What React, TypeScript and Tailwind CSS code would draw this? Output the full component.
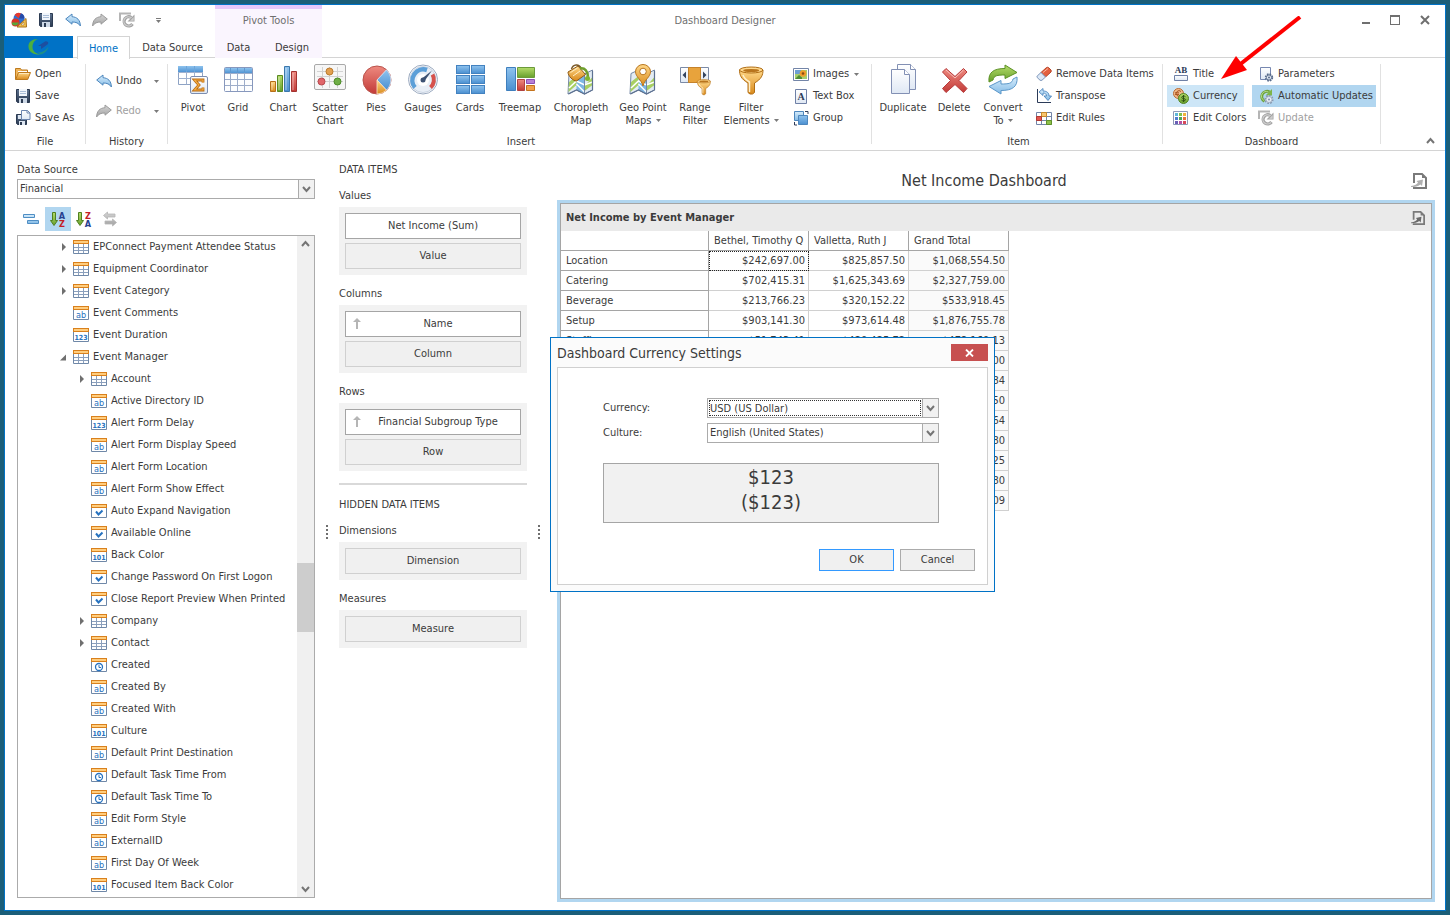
import { useState, type ReactNode } from 'react';
import clsx from 'clsx';

type FieldKind = 'table' | 'ab' | '123' | '101' | 'check' | 'clock';

interface Field {
  label: string;
  kind: FieldKind;
  level: number;
  state?: 'open' | 'closed';
}

const FIELDS: Field[] = [
  { label: 'EPConnect Payment Attendee Status', kind: 'table', level: 1, state: 'closed' },
  { label: 'Equipment Coordinator', kind: 'table', level: 1, state: 'closed' },
  { label: 'Event Category', kind: 'table', level: 1, state: 'closed' },
  { label: 'Event Comments', kind: 'ab', level: 1 },
  { label: 'Event Duration', kind: '123', level: 1 },
  { label: 'Event Manager', kind: 'table', level: 1, state: 'open' },
  { label: 'Account', kind: 'table', level: 2, state: 'closed' },
  { label: 'Active Directory ID', kind: 'ab', level: 2 },
  { label: 'Alert Form Delay', kind: '123', level: 2 },
  { label: 'Alert Form Display Speed', kind: 'ab', level: 2 },
  { label: 'Alert Form Location', kind: 'ab', level: 2 },
  { label: 'Alert Form Show Effect', kind: 'ab', level: 2 },
  { label: 'Auto Expand Navigation', kind: 'check', level: 2 },
  { label: 'Available Online', kind: 'check', level: 2 },
  { label: 'Back Color', kind: '101', level: 2 },
  { label: 'Change Password On First Logon', kind: 'check', level: 2 },
  { label: 'Close Report Preview When Printed', kind: 'check', level: 2 },
  { label: 'Company', kind: 'table', level: 2, state: 'closed' },
  { label: 'Contact', kind: 'table', level: 2, state: 'closed' },
  { label: 'Created', kind: 'clock', level: 2 },
  { label: 'Created By', kind: 'ab', level: 2 },
  { label: 'Created With', kind: 'ab', level: 2 },
  { label: 'Culture', kind: '101', level: 2 },
  { label: 'Default Print Destination', kind: 'ab', level: 2 },
  { label: 'Default Task Time From', kind: 'clock', level: 2 },
  { label: 'Default Task Time To', kind: 'clock', level: 2 },
  { label: 'Edit Form Style', kind: 'ab', level: 2 },
  { label: 'ExternalID', kind: 'ab', level: 2 },
  { label: 'First Day Of Week', kind: 'ab', level: 2 },
  { label: 'Focused Item Back Color', kind: '101', level: 2 },
];

const PIVOT_ROWS = [
  ['Location', '$242,697.00', '$825,857.50', '$1,068,554.50'],
  ['Catering', '$702,415.31', '$1,625,343.69', '$2,327,759.00'],
  ['Beverage', '$213,766.23', '$320,152.22', '$533,918.45'],
  ['Setup', '$903,141.30', '$973,614.48', '$1,876,755.78'],
  ['Staffing', '$51,743.41', '$420,425.72', '$472,169.13'],
  ['', '', '', '$98,250.00'],
  ['', '', '', '$41,306.84'],
  ['', '', '', '$12,482.50'],
  ['', '', '', '$76,190.64'],
  ['', '', '', '$30,415.80'],
  ['', '', '', '$22,764.25'],
  ['', '', '', '$18,093.80'],
  ['', '', '', '$6,578,665.09'],
];

/* ---------- icons ---------- */

function Svg({ size, children }: { size: number; children: ReactNode }) {
  return (
    <svg width={size} height={size} viewBox={`0 0 ${size} ${size}`} fill="none" className="shrink-0" aria-hidden="true">
      {children}
    </svg>
  );
}

function Gradients() {
  const stops: [string, string, string][] = [
    ['gBlue', '#8fc3ee', '#4a8fd0'],
    ['gSky', '#d6ecfb', '#84bbe6'],
    ['gOrange', '#ffd889', '#d98a1c'],
    ['gGreen', '#b5dc6a', '#679f2c'],
    ['gRed', '#ee8a80', '#c23a37'],
    ['gPaper', '#ffffff', '#dfe8f4'],
    ['gSteel', '#5a6f8c', '#2c3b52'],
    ['gGrey', '#d5d5d5', '#a2a2a2'],
  ];
  return (
    <svg width="0" height="0" className="absolute" aria-hidden="true">
      <defs>
        {stops.map(([id, from, to]) => (
          <linearGradient key={id} id={id} x1="0" y1="0" x2="0" y2="1">
            <stop offset="0" stopColor={from} />
            <stop offset="1" stopColor={to} />
          </linearGradient>
        ))}
      </defs>
    </svg>
  );
}

const Floppy = () => (
  <>
    <path d="M1.500 1.500h13v13h-12l-1-1z" fill="url(#gSteel)" stroke="#2c3b52" />
    <path d="M4 1h8v7H4z" fill="#f2f6fb" />
    <path d="M5 3.500h6M5 5.500h6" stroke="#a9bdd6" />
    <path d="M4 10h8v5H4z" fill="#cdd8e6" />
    <path d="M6 11h2v4H6z" fill="#2c3b52" />
  </>
);

const UndoShape = ({ grey }: { grey?: boolean }) => (
  <path
    d="M.7 7 7 2v2.700c5 .3 8.300 3.300 8.400 9.300C13.500 11 11 10 7 10v2.200z"
    fill={grey ? 'url(#gGrey)' : 'url(#gSky)'}
    stroke={grey ? '#9b9b9b' : '#4c86bd'}
    strokeLinejoin="round"
  />
);

const UndoIcon = () => <Svg size={16}><UndoShape /></Svg>;
const RedoIcon = () => <Svg size={16}><g transform="translate(16 0) scale(-1 1)"><UndoShape grey /></g></Svg>;

const SaveIcon = () => <Svg size={16}><Floppy /></Svg>;

const SaveAsIcon = () => (
  <Svg size={16}>
    <path d="M1.500 4.500h10v10h-9l-1-1z" fill="url(#gSteel)" stroke="#2c3b52" />
    <path d="M3 5h4v4H3zM4 11h6v4H4z" fill="#dde6f1" />
    <path d="M5 12h2v3H5z" fill="#2c3b52" />
    <path d="M6.500.500h6l2.500 2.500v6.500H6.500z" fill="url(#gPaper)" stroke="#6d86b0" />
    <path d="M12 .500V3h3" stroke="#6d86b0" />
  </Svg>
);

const OpenIcon = () => (
  <Svg size={16}>
    <path d="M.500 13.500v-11h5l1 1.500h6v3" fill="#f0b65c" stroke="#bd7a1e" />
    <path d="M3 5.500h9" stroke="#fff" />
    <path d="M.700 13.500 3.500 6.500h12l-2.800 7z" fill="url(#gOrange)" stroke="#bd7a1e" strokeLinejoin="round" />
    <path d="M4 7.500h10" stroke="#ffe9b8" />
  </Svg>
);

const AppIcon = () => (
  <Svg size={16}>
    <circle cx="8" cy="6.500" r="5.500" fill="#2f6fd0" />
    <path d="M8 6.500 3.500 3A5.500 5.500 0 0 1 10 1.300z" fill="#e33a2e" />
    <path d="M8 6.500 10 1.300A5.500 5.500 0 0 1 13.500 6.500z" fill="#2549a8" />
    <circle cx="4.500" cy="10.500" r="4" fill="#d93426" />
    <path d="M1 10.500h7a4 4 0 0 1-7 1.500z" fill="#57a639" />
    <path d="m15 6.500.500 8.500H6z" fill="#f5c24e" stroke="#a7701b" strokeLinejoin="round" />
    <path d="m12.800 10 .200 3h-3z" fill="#fff" stroke="#a7701b" strokeWidth=".6" />
  </Svg>
);

const RefreshGreyIcon = () => (
  <Svg size={16}>
    <path d="M1 9V1.500h11" stroke="#b5b5b5" strokeWidth="2" />
    <path d="M13.500 12A4.600 4.600 0 1 1 12.300 5.500" stroke="#a3a3a3" strokeWidth="3.200" />
    <path d="M15.500 2.500v7H8.500z" fill="#a3a3a3" />
    <path d="M13 12.300A4.600 4.600 0 1 1 12 5.500" stroke="#cfcfcf" strokeWidth="1.200" />
    <path d="M14.700 5v3.700h-3.700z" fill="#cfcfcf" />
  </Svg>
);

const UpdatesIcon = () => (
  <Svg size={16}>
    <path d="M6.500 13.300A5.200 5.200 0 1 1 11.500 4" stroke="#6da33a" strokeWidth="3" />
    <path d="M14 1v6.500H7.500z" fill="#7fb548" />
    <path d="M6 12.500A4.700 4.700 0 0 1 10.500 4" stroke="#b4da8a" />
    <circle cx="11" cy="11.500" r="3.800" fill="#e9eef5" stroke="#8798b0" strokeDasharray="1.800 1.100" strokeWidth="1.600" />
    <circle cx="11" cy="11.500" r="3" fill="#e9eef5" stroke="#8798b0" strokeWidth=".7" />
    <circle cx="11" cy="11.500" r="1.100" fill="#8798b0" />
  </Svg>
);

const PivotIcon = () => (
  <Svg size={32}>
    <path d="M1.500 2.500h24v18h-24z" fill="#fff" stroke="#8da2c4" />
    <path d="M1 2h25v6.500H1z" fill="url(#gBlue)" />
    <path d="M1 8.500h25M1 14.500h25M9.500 8v12.500M17.500 8v12.500" stroke="#9fb1cf" />
    <path d="M9.500 2v6M17.500 2v6" stroke="#6ca5da" />
    <rect x="13.500" y="12.500" width="17" height="17" rx="1.500" fill="url(#gPaper)" stroke="#7c8db0" />
    <path d="M26 18.500v-2.500h-8.500l4.500 5-4.500 5H26v-2.500" stroke="#b8690e" strokeWidth="2.800" />
    <path d="M26 18.500v-2.500h-8.500l4.500 5-4.500 5H26v-2.500" stroke="#f4ac45" strokeWidth="1.200" />
  </Svg>
);

const GridIcon = () => (
  <Svg size={32}>
    <rect x="2.500" y="3.500" width="28" height="24" rx="1" fill="#fdfeff" stroke="#8798bd" />
    <path d="M3 4h27v5.500H3z" fill="url(#gBlue)" />
    <path d="M3 9.500h27M3 15.500h27M3 21.500h27M8.500 9v18M15.500 9v18M22.500 9v18" stroke="#9dadca" />
    <path d="M8.500 4v5M15.500 4v5M22.500 4v5" stroke="#5f98cf" />
  </Svg>
);

const ChartIcon = () => (
  <Svg size={32}>
    <path d="M3.500 17.500h5v10h-5z" fill="url(#gOrange)" stroke="#b56f1a" />
    <path d="M10.500 11.500h5v16h-5z" fill="url(#gGreen)" stroke="#5a8a22" />
    <path d="M17.500 2.500h5v25h-5z" fill="url(#gBlue)" stroke="#3c78ac" />
    <path d="M24.500 7.500h5v20h-5z" fill="url(#gRed)" stroke="#a33330" />
    <path d="M5 19v7M12 13v13M19 4v22M26 9v17" stroke="#fff" strokeOpacity=".5" />
  </Svg>
);

const ScatterIcon = () => (
  <Svg size={32}>
    <rect x=".500" y=".500" width="31" height="25" rx="1.500" fill="#f6f6f6" stroke="#a9a9a9" />
    <path d="M8.500 3v21M15.500 3v21M23.500 3v21M3 7.500h26M3 12.500h26M3 17.500h26" stroke="#d2d2d2" />
    <circle cx="15.500" cy="7.500" r="3.500" fill="#e2a050" stroke="#bb7a2c" />
    <circle cx="7.500" cy="17.500" r="3.500" fill="#e0666a" stroke="#b8474c" />
    <circle cx="23.500" cy="17.500" r="3.500" fill="#6fae46" stroke="#4b8a26" />
  </Svg>
);

const PiesIcon = () => (
  <Svg size={32}>
    <circle cx="17" cy="16" r="14" fill="url(#gRed)" stroke="#b9534c" />
    <path d="M17 16 26.500 5.800A14 14 0 0 1 26.500 26.200z" fill="url(#gBlue)" stroke="#dfeefa" strokeWidth=".8" />
    <path d="M17 16 26.500 26.200A14 14 0 0 1 17 30z" fill="url(#gOrange)" stroke="#fbe9cb" strokeWidth=".8" />
  </Svg>
);

const GaugesIcon = () => (
  <Svg size={32}>
    <circle cx="16" cy="15.500" r="14.500" fill="#fff" stroke="#9aa9bf" />
    <circle cx="16" cy="15.500" r="13" fill="#e9eff7" stroke="#c9d4e3" />
    <path d="M8 23.500A11 11 0 0 1 20 6" stroke="#5c9fd8" strokeWidth="4.500" />
    <path d="M25.500 10.500A10.500 10.500 0 0 1 23.500 23.500" stroke="#d6524c" strokeWidth="4" />
    <circle cx="16" cy="16" r="6" fill="#fff" />
    <path d="m15 14.500 10-8-7.500 10.500z" fill="#3d5273" />
    <circle cx="16" cy="16" r="2.500" fill="#3d5273" />
  </Svg>
);

const CardsIcon = () => (
  <Svg size={32}>
    {[1, 11, 21].map(y => (
      <g key={y}>
        <rect x="2.500" y={y + 0.5} width="13" height="8" fill="url(#gBlue)" stroke="#4382c0" />
        <rect x="17.500" y={y + 0.5} width="13" height="8" fill="url(#gBlue)" stroke="#4382c0" />
      </g>
    ))}
  </Svg>
);

const TreemapIcon = () => (
  <Svg size={32}>
    <path d="M2.500 3.500h9v23h-9z" fill="url(#gBlue)" stroke="#3f7fbd" />
    <path d="M13.500 3.500h17v10h-17z" fill="url(#gGreen)" stroke="#6b9a3a" />
    <path d="M13.500 15.500h7v11h-7z" fill="url(#gRed)" stroke="#b24340" />
    <path d="M22.500 15.500h8v4h-8z" fill="#b67fd6" stroke="#8b4fb4" />
    <path d="M22.500 21.500h8v5h-8z" fill="#f0a04a" stroke="#c4731d" />
  </Svg>
);

const FoldedMap = () => (
  <>
    <path d="M4 9.500 11.500 6l8 4L27.500 6v20l-8 4-8-4L3 30z" fill="#e3ecf4" stroke="#7488a6" strokeLinejoin="round" />
    <path d="M11.500 6.500 19.500 10v19.500l-8-3.500z" fill="#7db7e4" />
    <path d="M4 18l7.500-6v9L3.500 28zM19.500 22l8-9v8l-8 6z" fill="#a8cf62" />
    <path d="m11.500 20 8 8M4 24l7.500-7 8 4 8-3" stroke="#fff" strokeWidth="1.500" />
    <path d="M19.500 10v20" stroke="#7488a6" />
    <path d="M27.500 7v19l-8 4-8-4L3.500 30" stroke="#5d7191" strokeWidth="1.200" />
  </>
);

const ChoroplethIcon = () => (
  <Svg size={32}>
    <FoldedMap />
    <path d="M6.500 5C8 0 14-.500 16 4" stroke="#7a5a2a" strokeWidth="1.500" />
    <path d="M3 8 13 2l7.500 8.500-9 6.500C8 17 3 12 3 8z" fill="url(#gOrange)" stroke="#8f5a14" strokeLinejoin="round" />
    <path d="M15 4.500c5-1 8 3 8 9" stroke="#6f9f2e" strokeWidth="2.500" />
    <circle cx="22.500" cy="14.500" r="2.500" fill="#7fb52f" />
    <path d="m5.500 8.500 7-4.500M8 12l7-5" stroke="#ffeec4" />
  </Svg>
);

const PinMapIcon = () => (
  <Svg size={32}>
    <FoldedMap />
    <path d="M16 22C14.500 15.500 8.500 13 8.500 7.700a7.500 7.200 0 0 1 15 0C23.500 13 17.500 15.500 16 22z" fill="url(#gOrange)" stroke="#b97720" />
    <circle cx="16" cy="7.500" r="3.300" fill="#fff" stroke="#b97720" />
  </Svg>
);

const Funnel = ({ x, y, s }: { x: number; y: number; s: number }) => (
  <g transform={`translate(${x} ${y}) scale(${s})`}>
    <path d="M.500 4c0 5 1.500 9 8.500 13v9.500l2 1.500h2.500l2-1.500V17C22.500 13 24 9 24 4z" fill="url(#gOrange)" stroke="#b06d14" />
    <ellipse cx="12.200" cy="4" rx="11.700" ry="3" fill="#ffd88c" stroke="#b06d14" />
    <ellipse cx="12.200" cy="4.500" rx="8" ry="1.600" fill="#b8741d" />
    <path d="M4 9c1 3 3 5 6.500 7v10" stroke="#fff0cb" strokeWidth="1.500" />
  </g>
);

const RangeIcon = () => (
  <Svg size={32}>
    <path d="M1.500 3.500h28v15h-28z" fill="url(#gPaper)" stroke="#7b8aa6" />
    <path d="M9.500 3.500h12v15h-12z" fill="#e8a33c" stroke="#c5822a" />
    <path d="M7 7.500v7L3.500 11zM24 7.500v7l3.500-3.500z" fill="#34445f" />
    <Funnel x={18} y={15} s={0.56} />
  </Svg>
);

const FilterIcon = () => <Svg size={32}><Funnel x={4} y={2} s={1} /></Svg>;

const DuplicateIcon = () => (
  <Svg size={32}>
    <path d="M10.500.500h13l5 5v20h-18z" fill="url(#gPaper)" stroke="#8290b4" />
    <path d="M23.500.500v5h5" fill="#fff" stroke="#8290b4" />
    <path d="M4.500 5.500h13l5 5v19h-18z" fill="url(#gPaper)" stroke="#8290b4" />
    <path d="M17.500 5.500v5h5" fill="#fff" stroke="#8290b4" />
  </Svg>
);

const DeleteIcon = () => (
  <Svg size={32}>
    <path
      d="m8 4.500 9 8 8.500-8 3.500 3.500-8 8.500 8 8-3.500 4-8.500-8-9 8-3.500-4 8-8-8-8.500z"
      fill="url(#gRed)"
      stroke="#b73a3a"
      strokeLinejoin="round"
    />
    <path d="m8 6 9 8 8.500-8" stroke="#f8c0ba" />
  </Svg>
);

const ConvertIcon = () => (
  <Svg size={32}>
    <path d="M2 18C1 8 7 4.500 18 4.500V1l12 7.500-12 6V11c-8 0-11 .500-12 5z" fill="url(#gGreen)" stroke="#5c9125" strokeLinejoin="round" />
    <path d="M30 13c1 10-5 13.500-16 13.500v3.500L2 22.500l12-6V20c8 0 11-.500 12-5z" fill="url(#gSky)" stroke="#5b97c9" strokeLinejoin="round" />
  </Svg>
);

const ImagesIcon = () => (
  <Svg size={16}>
    <path d="M.500 2.500h15v12H.500z" fill="#fff" stroke="#7385a8" />
    <path d="M2 4h12v9H2z" fill="#a7cf6d" />
    <path d="M2 4h6v4H2z" fill="#6d9fd2" />
    <path d="m2 13 4-4 3 2.500V13z" fill="#4f8c34" />
    <circle cx="10" cy="7.500" r="3.300" fill="#ee9d2a" />
    <circle cx="10" cy="7.500" r="1.300" fill="#8a4c12" />
  </Svg>
);

const TextBoxIcon = () => (
  <Svg size={16}>
    <path d="M2.500 1.500h11v14h-11z" fill="url(#gPaper)" stroke="#6f80a6" />
    <text x="8" y="12" textAnchor="middle" fontSize="10" fontWeight="700" fontFamily='"Liberation Serif", serif' fill="#2c3b58">A</text>
  </Svg>
);

const GroupIcon = () => (
  <Svg size={16}>
    <path d="M1.500 1.500h9v9h-9z" fill="url(#gSky)" stroke="#4d86bd" />
    <path d="M5.500 5.500h9v9h-9z" fill="url(#gBlue)" stroke="#4d86bd" />
    <path d="M12 1.500h3V4M1.500 12v3H4" stroke="#2c3b58" />
  </Svg>
);

const EraserIcon = () => (
  <Svg size={16}>
    <path d="M5 6.500 10.500 1.500q1-.500 2 0L15 4q.500 1 0 2L9.500 11z" fill="#e4603f" stroke="#b5452a" />
    <path d="m5 6.500 4.500 4.500L6 14.200q-1 .500-2 0L1.200 11.500q-.500-1 0-1.500z" fill="#dce8f6" stroke="#7f97bb" />
    <path d="m7 6.500 5-4" stroke="#f9b7a0" />
  </Svg>
);

const TransposeIcon = () => (
  <Svg size={16}>
    <path d="M1.500 1v13.500H15" stroke="#2c3b58" />
    <path d="m3 4 4-3.500V3c4 0 6 2 6 5h2.500L12 12.500 8 8h2.500C10.500 6 9 5 7 5v2.500z" fill="url(#gSky)" stroke="#4d86bd" strokeWidth=".9" />
  </Svg>
);

const RulesIcon = () => (
  <Svg size={16}>
    <path d="M.500 2.500h15v12H.500z" fill="#fff" stroke="#7385a8" />
    <path d="M5.500 2.500v12M10.500 2.500v12M.500 6.500h15M.500 10.500h15" stroke="#7385a8" />
    <path d="M5.500 2.500h5v4h-5z" fill="#f8c572" stroke="#c98a28" />
    <path d="M.500 6.500h5v4H.500z" fill="#e2564f" stroke="#b23a34" />
    <path d="M10.500 10.500h5v4h-5z" fill="#8fc04a" stroke="#5f9128" />
  </Svg>
);

const TitleIcon = () => (
  <Svg size={16}>
    <text x="8" y="7" textAnchor="middle" fontSize="9" fontWeight="700" fontFamily='"Liberation Serif", serif' fill="#2c3b58">AB</text>
    <path d="M1.500 9.500h13v5h-13z" fill="url(#gPaper)" stroke="#6f80a6" />
  </Svg>
);

const CurrencyIcon = () => (
  <Svg size={16}>
    <circle cx="5.500" cy="5.500" r="5" fill="#f0b98a" stroke="#b86a34" />
    <path d="M8 3.500A2.800 2.800 0 1 0 8 7.500M2 4.800h4M2 6.400h4" stroke="#a8521e" />
    <circle cx="10.500" cy="10.500" r="5" fill="url(#gGreen)" stroke="#528322" />
    <path d="M12.500 8.700c-1-1-3.800-.8-3.800.7 0 1.700 3.800.7 3.800 2.300 0 1.500-3 1.500-4 .5M10.500 7v7" stroke="#2f5212" />
  </Svg>
);

const ColorsIcon = () => {
  const colors = ['#5fb7d8', '#7fc04c', '#f0b33c', '#4f7fd0', '#4fa25a', '#e4763a', '#6a5fb8', '#b451a4', '#d8485a'];
  return (
    <Svg size={16}>
      <path d="M.500 1.500h14v13H.500z" fill="#fff" stroke="#8d9ab8" />
      {colors.map((c, i) => (
        <rect key={c} x={2 + (i % 3) * 4} y={3 + Math.floor(i / 3) * 4} width="3" height="3" fill={c} />
      ))}
    </Svg>
  );
};

const ParametersIcon = () => (
  <Svg size={16}>
    <path d="M2.500 1.500h10v12h-10z" fill="url(#gPaper)" stroke="#7687b0" />
    <circle cx="11" cy="11.500" r="3.400" fill="#e4eaf3" stroke="#586c8c" strokeDasharray="1.600 1.100" strokeWidth="1.600" />
    <circle cx="11" cy="11.500" r="2.600" fill="#e4eaf3" stroke="#586c8c" />
    <circle cx="11" cy="11.500" r="1" fill="#586c8c" />
  </Svg>
);

const GroupByTypeIcon = () => (
  <Svg size={16}>
    <path d="M.500 3.500h11v3H.500zM4.500 9.500h11v3h-11z" fill="url(#gSky)" stroke="#4f8ec4" />
  </Svg>
);

const SortIcon = ({ letters }: { letters: [string, string] }) => (
  <Svg size={16}>
    <path d="M2.500 1.500h3v8h2L4 14.500.500 9.500h2z" fill="url(#gGreen)" stroke="#4f8020" />
    <text x="12" y="7.500" textAnchor="middle" fontSize="9" fontWeight="700" fill={letters[0] === 'A' ? '#26408f' : '#c22026'}>{letters[0]}</text>
    <text x="12" y="15.500" textAnchor="middle" fontSize="9" fontWeight="700" fill={letters[1] === 'A' ? '#26408f' : '#c22026'}>{letters[1]}</text>
  </Svg>
);

const SwapIcon = () => (
  <Svg size={16}>
    <path d="m1.500 4.500 4-3.500v2H13v3H5.500v2zM14.500 11.500l-4-3.500v2H3v3h7.500v2z" fill="url(#gGrey)" stroke="#b5b5b5" strokeWidth=".8" />
  </Svg>
);

function FieldIcon({ kind }: { kind: FieldKind }) {
  return (
    <Svg size={16}>
      <path d="M.500 2.500h15v12H.500z" fill="#fff" stroke="#6f88a8" />
      <path d="M0 1h16v4H0z" fill="#d9801c" />
      <path d="M1 2h14v2H1z" fill="#ffcd7e" />
      {kind === 'table' && <path d="M1 8.500h14M1 11.500h14M5.500 5v9M10.500 5v9" stroke="#8ba0bd" />}
      {(kind === 'ab' || kind === '123' || kind === '101') && (
        <text x="8" y="13" textAnchor="middle" fontSize={kind === 'ab' ? 9 : 7} fontWeight={kind === 'ab' ? 400 : 700} fill="#2672c0">
          {kind}
        </text>
      )}
      {kind === 'check' && <path d="m5 8.500 2.500 3 4-4" stroke="#2672c0" strokeWidth="2" />}
      {kind === 'clock' && (
        <>
          <circle cx="8" cy="10" r="3.500" stroke="#2672c0" strokeWidth="1.300" />
          <path d="M8 8v2.500h2" stroke="#2672c0" />
        </>
      )}
    </Svg>
  );
}

const ExportIcon = ({ strong }: { strong?: boolean }) => (
  <svg width={strong ? 14 : 16} height={strong ? 14 : 16} viewBox="0 0 16 16" fill="none" aria-hidden="true">
    <path d="M3 10V1h8l4 4v10H2" stroke="#7a7a7a" strokeWidth="2" />
    <path d="M11 1v4h4z" fill="#7a7a7a" />
    <path d="M0 13c4-.500 6-1.500 7-3.500L5.500 8 12 6.500 11 13 9.500 11.500C7 13.500 4 14 0 14z" fill={strong ? '#6a6a6a' : '#b0b0b0'} />
  </svg>
);

const Chevron = () => (
  <svg width="9" height="7" viewBox="0 0 9 7" fill="none" aria-hidden="true">
    <path d="m1 1 3.500 4L8 1" stroke="#757575" strokeWidth="2" />
  </svg>
);

const Caret = ({ className }: { className?: string }) => (
  <svg width="5" height="3" viewBox="0 0 5 3" className={clsx('inline-block shrink-0', className)} aria-hidden="true">
    <path d="M0 0h5L2.500 3z" fill="#7a7a7a" />
  </svg>
);

/* ---------- ribbon ---------- */

interface LargeButtonProps {
  icon: ReactNode;
  lines: string[];
  width: string;
  caret?: boolean;
}

function LargeButton({ icon, lines, width, caret }: LargeButtonProps) {
  return (
    <button type="button" className={clsx('flex shrink-0 flex-col items-center whitespace-nowrap', width)}>
      {icon}
      <span className="mt-[5px] flex flex-col items-center leading-[13px]">
        {lines.map((line, i) => (
          <span key={line} className="flex items-center gap-1">
            {line}
            {caret && i === lines.length - 1 && <Caret />}
          </span>
        ))}
      </span>
    </button>
  );
}

interface SmallButtonProps {
  icon: ReactNode;
  label: string;
  caret?: boolean;
  disabled?: boolean;
  className?: string;
}

function SmallButton({ icon, label, caret, disabled, className }: SmallButtonProps) {
  return (
    <button
      type="button"
      disabled={disabled}
      className={clsx('flex h-[22px] items-center gap-1 whitespace-nowrap pl-1.5', disabled && 'text-[#a0a0a0]', className)}
    >
      {icon}
      <span>{label}</span>
      {caret && <Caret className="mr-1 ml-auto" />}
    </button>
  );
}

function RibbonGroup({ title, className, children }: { title: string; className?: string; children: ReactNode }) {
  return (
    <section className={clsx('flex shrink-0 flex-col border-r border-[#e1e1e1]', className)}>
      <div className="flex flex-1">{children}</div>
      <h2 className="-mb-1.5 h-4 text-center leading-4">{title}</h2>
    </section>
  );
}

function Ribbon() {
  return (
    <div className="flex h-[93px] border-b border-[#d4d4d4] py-1.5">
      <RibbonGroup title="File" className="w-[81px]">
        <div className="-mt-px flex flex-col pl-1">
          <SmallButton icon={<OpenIcon />} label="Open" />
          <SmallButton icon={<SaveIcon />} label="Save" />
          <SmallButton icon={<SaveAsIcon />} label="Save As" />
        </div>
      </RibbonGroup>
      <RibbonGroup title="History" className="w-[82px]">
        <div className="flex flex-1 flex-col gap-2 px-1 pt-1.5">
          <SmallButton icon={<UndoIcon />} label="Undo" caret />
          <SmallButton icon={<RedoIcon />} label="Redo" caret disabled />
        </div>
      </RibbonGroup>
      <RibbonGroup title="Insert" className="w-[704px] pl-[3px]">
        <LargeButton icon={<PivotIcon />} lines={['Pivot']} width="w-11" />
        <LargeButton icon={<GridIcon />} lines={['Grid']} width="w-[46px]" />
        <LargeButton icon={<ChartIcon />} lines={['Chart']} width="w-11" />
        <LargeButton icon={<ScatterIcon />} lines={['Scatter', 'Chart']} width="w-[50px]" />
        <LargeButton icon={<PiesIcon />} lines={['Pies']} width="w-[42px]" />
        <LargeButton icon={<GaugesIcon />} lines={['Gauges']} width="w-[52px]" />
        <LargeButton icon={<CardsIcon />} lines={['Cards']} width="w-[42px]" />
        <LargeButton icon={<TreemapIcon />} lines={['Treemap']} width="w-[58px]" />
        <LargeButton icon={<ChoroplethIcon />} lines={['Choropleth', 'Map']} width="w-16" />
        <LargeButton icon={<PinMapIcon />} lines={['Geo Point', 'Maps']} width="w-[60px]" caret />
        <LargeButton icon={<RangeIcon />} lines={['Range', 'Filter']} width="w-11" />
        <LargeButton icon={<FilterIcon />} lines={['Filter', 'Elements']} width="w-[68px]" caret />
        <div className="-mt-px flex w-20 flex-col px-0.5">
          <SmallButton icon={<ImagesIcon />} label="Images" caret />
          <SmallButton icon={<TextBoxIcon />} label="Text Box" />
          <SmallButton icon={<GroupIcon />} label="Group" />
        </div>
      </RibbonGroup>
      <RibbonGroup title="Item" className="w-[291px] pl-[3px]">
        <LargeButton icon={<DuplicateIcon />} lines={['Duplicate']} width="w-14" />
        <LargeButton icon={<DeleteIcon />} lines={['Delete']} width="w-[46px]" />
        <LargeButton icon={<ConvertIcon />} lines={['Convert', 'To']} width="w-[52px]" caret />
        <div className="-mt-px flex flex-col pl-px">
          <SmallButton icon={<EraserIcon />} label="Remove Data Items" />
          <SmallButton icon={<TransposeIcon />} label="Transpose" />
          <SmallButton icon={<RulesIcon />} label="Edit Rules" />
        </div>
      </RibbonGroup>
      <RibbonGroup title="Dashboard" className="w-[218px] px-1">
        <div className="-mt-px flex w-[77px] flex-col">
          <SmallButton icon={<TitleIcon />} label="Title" />
          <SmallButton icon={<CurrencyIcon />} label="Currency" className="bg-[#cde6f7]" />
          <SmallButton icon={<ColorsIcon />} label="Edit Colors" />
        </div>
        <div className="-mt-px ml-2 flex min-w-0 flex-1 flex-col">
          <SmallButton icon={<ParametersIcon />} label="Parameters" />
          <SmallButton icon={<UpdatesIcon />} label="Automatic Updates" className="bg-[#b1d6f0]" />
          <SmallButton icon={<RefreshGreyIcon />} label="Update" disabled />
        </div>
      </RibbonGroup>
      <button type="button" aria-label="Collapse ribbon" className="mt-auto mr-2.5 ml-auto rotate-180">
        <Chevron />
      </button>
    </div>
  );
}

function TitleBar() {
  return (
    <header className="grid h-[53px] grid-cols-[1fr_auto_1fr] border-b border-[#d4d4d4]">
      <div className="flex">
        <div className="flex w-[210px] flex-col">
          <div className="mb-px flex h-[30px] items-center gap-[11px] pl-1.5">
            <AppIcon />
            <button type="button" aria-label="Save"><SaveIcon /></button>
            <button type="button" aria-label="Undo"><UndoIcon /></button>
            <button type="button" aria-label="Redo"><RedoIcon /></button>
            <button type="button" aria-label="Refresh"><RefreshGreyIcon /></button>
            <button type="button" aria-label="Customize toolbar" className="ml-2.5 flex flex-col items-center gap-px">
              <span className="h-px w-[5px] bg-[#7a7a7a]" />
              <Caret />
            </button>
          </div>
          <nav className="flex h-[22px]">
            <button type="button" aria-label="Application menu" className="flex w-[68px] items-center justify-center bg-[#0072c6]">
              <svg width="24" height="18" viewBox="0 0 24 18" fill="none" aria-hidden="true">
                <path d="M11 1C5 1 1 4 1.500 9c.500 5 5 8 12 7.500-5-1-8-3.500-8-7.500 0-3.500 2-7 5.500-8z" fill="#4caf3f" />
                <path d="M13.500 16.500c4-.500 7-4 8-8-3 4-6 6-11 6z" fill="#1d8f8a" />
                <path d="m11 8 7-4.500c2-.500 4 .500 3 2.500L17 9l-3 2v-3z" fill="#1c4fa0" />
              </svg>
            </button>
            <button type="button" className="-mb-px ml-1 w-[53px] border border-b-0 border-[#d4d4d4] bg-white pt-0.5 text-[#0072c6]">Home</button>
            <button type="button" className="flex-1 pt-0.5 text-center">Data Source</button>
          </nav>
        </div>
        <div className="flex w-[107px] flex-col border-t-4 border-[#e6c8fb] bg-[#faf5fe]">
          <div className="mb-1 flex h-[23px] items-center justify-center text-[#6f6f6f]">Pivot Tools</div>
          <nav className="flex h-[22px]">
            <button type="button" className="w-[47px] pt-0.5">Data</button>
            <button type="button" className="flex-1 pt-0.5">Design</button>
          </nav>
        </div>
      </div>
      <h1 className="pt-2 leading-4 text-[#6f6f6f]">Dashboard Designer</h1>
      <div className="flex h-[30px] items-center justify-end gap-5 pr-[15px]">
        <button type="button" aria-label="Minimize" className="mt-1.5 h-0.5 w-2 bg-[#6f6f6f]" />
        <button type="button" aria-label="Maximize" className="h-[10px] w-[10px] border border-t-2 border-[#6f6f6f]" />
        <button type="button" aria-label="Close">
          <svg width="10" height="10" viewBox="0 0 10 10" aria-hidden="true">
            <path d="m1 1 8 8M9 1 1 9" stroke="#6f6f6f" strokeWidth="2" />
          </svg>
        </button>
      </div>
    </header>
  );
}

/* ---------- panels ---------- */

interface ComboProps {
  id: string;
  value: string;
  focused?: boolean;
}

function Combo({ id, value, focused }: ComboProps) {
  return (
    <div className="relative flex h-5 flex-1 border border-[#ababab] bg-white">
      <select
        id={id}
        className={clsx('w-full appearance-none outline-none', focused ? 'm-px mr-[17px] border border-dotted border-[#333]' : 'pl-0.5')}
      >
        <option>{value}</option>
      </select>
      <span className="pointer-events-none absolute top-0 right-0 flex h-full w-4 items-center justify-center border-l border-[#ababab] bg-[#f1f1f1]">
        <Chevron />
      </span>
    </div>
  );
}

function FieldRow({ field }: { field: Field }) {
  return (
    <li role="treeitem" className={clsx('flex h-[22px] items-center whitespace-nowrap', field.level === 1 ? 'pl-[42px]' : 'pl-[60px]')}>
      <span className="flex w-[13px] items-center">
        {field.state && (
          <button type="button" aria-label={`Toggle ${field.label}`} className={clsx('flex', field.state === 'closed' && 'pl-0.5')}>
            <svg width="7" height="8" viewBox="0 0 7 8" aria-hidden="true">
              <path d={field.state === 'open' ? 'M6 1.500V7.500H0z' : 'M0 0v8l4-4z'} fill="#6f6f6f" />
            </svg>
          </button>
        )}
      </span>
      <FieldIcon kind={field.kind} />
      <span className="pl-1">{field.label}</span>
    </li>
  );
}

function DataSourcePanel() {
  const [sort, setSort] = useState('az');

  return (
    <aside className="flex w-[298px] shrink-0 flex-col">
      <label htmlFor="data-source" className="mb-px leading-4">Data Source</label>
      <div className="flex">
        <Combo id="data-source" value="Financial" />
      </div>
      <div className="mt-2 mb-1 flex h-6">
        <button type="button" aria-label="Group by type" className="flex w-7 items-center justify-center"><GroupByTypeIcon /></button>
        <button
          type="button"
          aria-label="Sort ascending"
          onClick={() => setSort('az')}
          className={clsx('flex w-[26px] items-center justify-center', sort === 'az' && 'bg-[#b1d6f0]')}
        >
          <SortIcon letters={['A', 'Z']} />
        </button>
        <button
          type="button"
          aria-label="Sort descending"
          onClick={() => setSort('za')}
          className={clsx('flex w-[26px] items-center justify-center', sort === 'za' && 'bg-[#b1d6f0]')}
        >
          <SortIcon letters={['Z', 'A']} />
        </button>
        <button type="button" aria-label="Refresh fields" className="flex w-[26px] items-center justify-center"><SwapIcon /></button>
      </div>
      <div className="flex flex-1 border border-[#ababab]">
        <ul role="tree" className="min-w-0 flex-1 overflow-hidden">
          {FIELDS.map(field => (
            <FieldRow key={field.label} field={field} />
          ))}
        </ul>
        {/* Scrollbar */}
        <div className="flex w-[17px] shrink-0 flex-col items-center bg-[#f0f0f0]">
          <span className="flex h-4 rotate-180 items-center"><Chevron /></span>
          <span className="flex-[311]" />
          <span className="h-[69px] w-full bg-[#cdcdcd]" />
          <span className="flex-[249]" />
          <span className="flex h-4 items-center"><Chevron /></span>
        </div>
      </div>
    </aside>
  );
}

function Splitter() {
  return (
    <div className="flex w-6 shrink-0 flex-col items-center justify-center gap-0.5">
      {[0, 1, 2, 3].map(i => (
        <span key={i} className="size-0.5 bg-[#6f6f6f]" />
      ))}
    </div>
  );
}

interface Slot {
  label: string;
  filled?: boolean;
  sorted?: boolean;
}

function DataSection({ title, slots }: { title: string; slots: Slot[] }) {
  return (
    <section className="mb-[11px]">
      <h3 className="mb-[3px] leading-4">{title}</h3>
      <div className="flex flex-col gap-1 bg-[#f2f2f2] p-1.5">
        {slots.map(slot => (
          <button
            key={slot.label}
            type="button"
            className={clsx(
              'relative h-[26px] border text-center',
              slot.filled ? 'border-[#a5a5a5] bg-white' : 'border-[#d0d0d0] bg-[#f0f0f0]',
              slot.sorted && 'pl-2.5',
            )}
          >
            {slot.sorted && (
              <svg width="8" height="11" viewBox="0 0 8 11" className="absolute top-1.5 left-[7px]" aria-hidden="true">
                <path d="M4 0 8 4H5v7H3V4H0z" fill="#b5b5b5" />
              </svg>
            )}
            {slot.label}
          </button>
        ))}
      </div>
    </section>
  );
}

function DataItemsPanel() {
  return (
    <aside className="w-[188px] shrink-0">
      <h2 className="mb-2.5 leading-4">DATA ITEMS</h2>
      <DataSection title="Values" slots={[{ label: 'Net Income (Sum)', filled: true }, { label: 'Value' }]} />
      <DataSection title="Columns" slots={[{ label: 'Name', filled: true, sorted: true }, { label: 'Column' }]} />
      <DataSection title="Rows" slots={[{ label: 'Financial Subgroup Type', filled: true, sorted: true }, { label: 'Row' }]} />
      <hr className="my-3 border-t-2 border-[#d9d9d9]" />
      <h2 className="mb-2.5 leading-4">HIDDEN DATA ITEMS</h2>
      <DataSection title="Dimensions" slots={[{ label: 'Dimension' }]} />
      <DataSection title="Measures" slots={[{ label: 'Measure' }]} />
    </aside>
  );
}

function PivotTable() {
  return (
    <table className="table-fixed border-separate border-spacing-0">
      <colgroup>
        <col className="w-[148px]" />
        <col className="w-[100px]" />
        <col className="w-[100px]" />
        <col className="w-[100px]" />
      </colgroup>
      <thead>
        <tr className="h-5">
          {['', 'Bethel, Timothy Q', 'Valletta, Ruth J', 'Grand Total'].map(head => (
            <th key={head} scope="col" className="border-r border-b border-[#a5a5a5] p-0 pl-[5px] text-left font-normal whitespace-nowrap">
              {head}
            </th>
          ))}
        </tr>
      </thead>
      <tbody>
        {PIVOT_ROWS.map(([name, ...values], r) => (
          <tr key={r} className="h-5">
            <th scope="row" className="border-r border-b border-[#a5a5a5] p-0 pl-[5px] text-left font-normal">{name}</th>
            {values.map((value, c) => (
              <td
                key={c}
                className={clsx(
                  'border-r border-b border-[#d0d0d0] p-0 pr-[3px] text-right leading-4',
                  c === 2 && 'bg-[#fafafa]',
                  r === 0 && c === 0 && 'outline outline-dotted -outline-offset-1 outline-[#222]',
                )}
              >
                {value}
              </td>
            ))}
          </tr>
        ))}
      </tbody>
    </table>
  );
}

function DashboardSurface() {
  return (
    <main className="flex min-w-0 flex-1 flex-col">
      <div className="flex h-[38px] items-center pr-2">
        <h2 className="flex-1 text-center text-base">Net Income Dashboard</h2>
        <button type="button" aria-label="Export dashboard"><ExportIcon /></button>
      </div>
      <section className="flex flex-1 flex-col border-3 border-[#b1d6f0]">
        <div className="flex-1 border border-[#a5a5a5]">
          <div className="flex h-[27px] items-center bg-[#eaeaea] pr-1.5 pl-[5px]">
            <h3 className="flex-1 font-bold">Net Income by Event Manager</h3>
            <button type="button" aria-label="Export item"><ExportIcon strong /></button>
          </div>
          <PivotTable />
        </div>
      </section>
    </main>
  );
}

function CurrencyDialog() {
  return (
    <div
      role="dialog"
      aria-labelledby="dialog-title"
      className="absolute top-[186px] left-[545px] w-[445px] border border-[#0072c6] bg-[#fbfbfb] px-1.5 pb-1.5"
    >
      <div className="flex h-[29px] items-center">
        <h2 id="dialog-title" className="flex-1 text-sm">Dashboard Currency Settings</h2>
        <button type="button" aria-label="Close dialog" className="flex h-[17px] w-[37px] items-center justify-center bg-[#c75050]">
          <svg width="9" height="8" viewBox="0 0 9 8" aria-hidden="true">
            <path d="m1 .500 7 7M8 .500l-7 7" stroke="#fff" strokeWidth="1.800" />
          </svg>
        </button>
      </div>
      <form className="border border-[#d0d0d0] bg-white pt-[30px] pr-3 pb-[13px] pl-[45px]" onSubmit={e => e.preventDefault()}>
        <div className="pr-9">
          <div className="mb-[5px] flex items-center">
            <label htmlFor="currency" className="w-[104px]">Currency:</label>
            <Combo id="currency" value="USD (US Dollar)" focused />
          </div>
          <div className="mb-5 flex items-center">
            <label htmlFor="culture" className="w-[104px]">Culture:</label>
            <Combo id="culture" value="English (United States)" />
          </div>
          <div className="flex h-[60px] flex-col items-center justify-center border border-[#a5a5a5] bg-[#f1f1f1] pb-1.5 text-xl leading-[25px]">
            <span>$123</span>
            <span>($123)</span>
          </div>
        </div>
        <div className="mt-[26px] flex justify-end gap-1.5">
          <button type="submit" className="h-[22px] w-[75px] border border-[#3399ff] bg-[#f0f0f0]">OK</button>
          <button type="button" className="h-[22px] w-[75px] border border-[#ababab] bg-[#f0f0f0]">Cancel</button>
        </div>
      </form>
    </div>
  );
}

export default function App() {
  return (
    <div className="flex min-h-screen bg-[#1b5e78] p-1 font-['DejaVu_Sans_Condensed','DejaVu_Sans',sans-serif] text-[11px] leading-4 text-[#3b3b3b]">
      <Gradients />
      <div className="relative flex min-w-0 flex-1 flex-col border border-[#0072c6] bg-white">
        <TitleBar />
        <Ribbon />
        <div className="relative flex flex-1 pt-[11px] pr-[10px] pb-2 pl-3">
          <div className="flex pb-1"><DataSourcePanel /></div>
          <Splitter />
          <DataItemsPanel />
          <Splitter />
          <div className="ml-1.5 flex min-w-0 flex-1"><DashboardSurface /></div>
          <CurrencyDialog />
        </div>

        {/* Callout arrow */}
        <svg width="82" height="66" viewBox="0 0 82 66" className="pointer-events-none absolute top-[11px] left-[1215px]" aria-hidden="true">
          <path d="M80 1 18 50" stroke="#fe0000" strokeWidth="4" />
          <path d="M1 63 16 40l11 14z" fill="#fe0000" />
        </svg>
      </div>
    </div>
  );
}
